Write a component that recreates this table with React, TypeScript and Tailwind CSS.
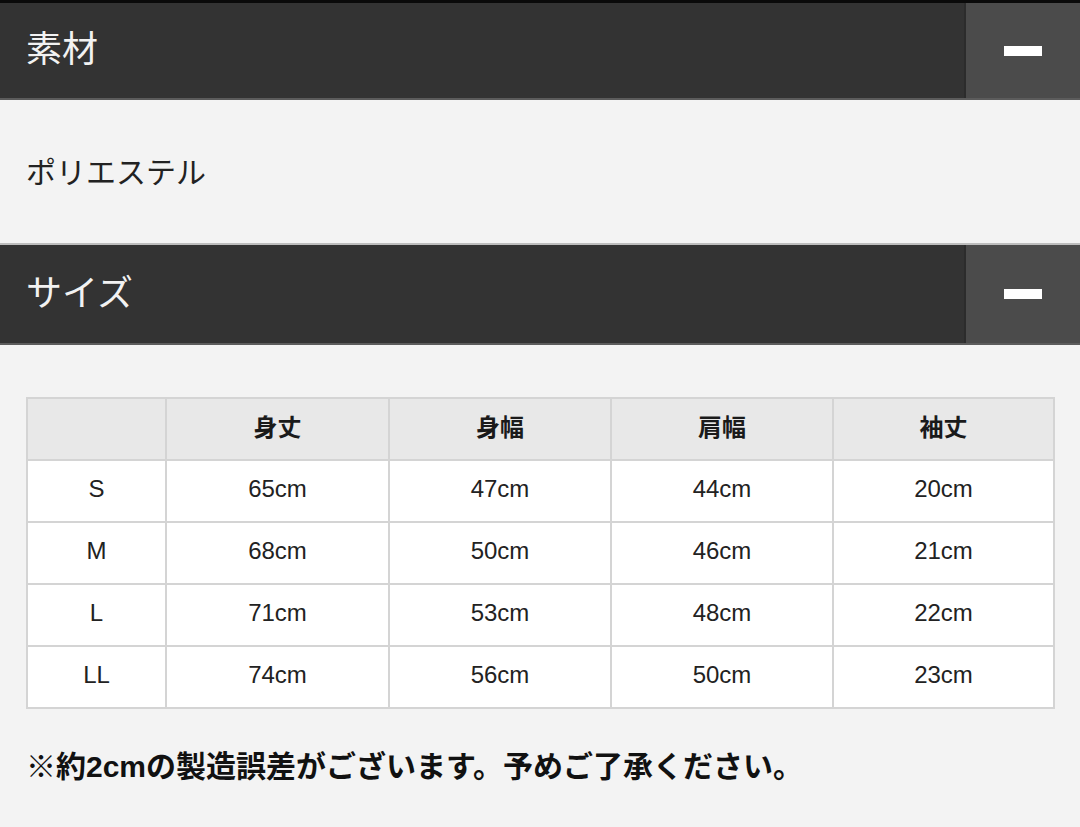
import React from "react";

const jp = { fontFamily: '"Noto Sans CJK JP", "Noto Sans", sans-serif' };
const latin = { fontFamily: '"Liberation Sans", "Noto Sans CJK JP", sans-serif' };

const columns = ["身丈", "身幅", "肩幅", "袖丈"];

const rows = [
  { size: "S", values: ["65cm", "47cm", "44cm", "20cm"] },
  { size: "M", values: ["68cm", "50cm", "46cm", "21cm"] },
  { size: "L", values: ["71cm", "53cm", "48cm", "22cm"] },
  { size: "LL", values: ["74cm", "56cm", "50cm", "23cm"] },
];

function SectionHeader({ title, topLine }: { title: string; topLine?: boolean }) {
  return (
    <div
      className={`flex bg-[#333333] border-b-2 border-[#5c5c5c] ${
        topLine ? "border-t-2 border-t-[#bdbdbd] h-[102px]" : "h-[97px]"
      }`}
    >
      <div className="flex-1 flex items-center pl-[26px] pb-[9px]">
        <span className="text-[36px] text-[#f2f2f2] leading-none" style={jp}>
          {title}
        </span>
      </div>
      <button
        type="button"
        className="w-[116px] bg-[#4b4b4b] border-l-2 border-[#2c2c2c] flex items-center justify-center"
      >
        <span className="block w-[38px] h-[10px] bg-white" />
      </button>
    </div>
  );
}

export default function App() {
  return (
    <div className="min-h-screen bg-[#f3f3f3] w-[1080px]">
      <div className="h-[3px] bg-[#0a0a0a]" />
      <SectionHeader title="素材" />

      {/* Material */}
      <div className="h-[143px] flex items-center pl-[26px] pb-[2px]">
        <span className="text-[30px] text-[#222]" style={jp}>
          ポリエステル
        </span>
      </div>

      <SectionHeader title="サイズ" topLine />

      {/* Size table */}
      <div className="px-[26px] pt-[52px]">
        <table className="w-[1028px] border-collapse table-fixed bg-white">
          <colgroup>
            <col className="w-[139px]" />
            <col className="w-[223px]" />
            <col className="w-[222px]" />
            <col className="w-[222px]" />
            <col className="w-[221px]" />
          </colgroup>
          <thead>
            <tr className="h-[62px] bg-[#e8e8e8]">
              <th className="border-2 border-[#d4d4d4]" />
              {columns.map((c) => (
                <th
                  key={c}
                  className="border-2 border-[#d4d4d4] text-[24px] font-bold text-[#1a1a1a] text-center pb-[6px]"
                  style={jp}
                >
                  {c}
                </th>
              ))}
            </tr>
          </thead>
          <tbody>
            {rows.map((r) => (
              <tr key={r.size} className="h-[62px]">
                <td
                  className="border-2 border-[#d4d4d4] text-center text-[24px] text-[#222] pb-[4px]"
                  style={latin}
                >
                  {r.size}
                </td>
                {r.values.map((v, i) => (
                  <td
                    key={i}
                    className="border-2 border-[#d4d4d4] text-center text-[24px] text-[#222] pb-[4px]"
                    style={latin}
                  >
                    {v}
                  </td>
                ))}
              </tr>
            ))}
          </tbody>
        </table>
      </div>

      <div className="px-[26px] pt-[38px] pb-[40px]">
        <p className="text-[30px] font-bold text-[#111] leading-[40px]" style={latin}>
          ※約2cmの製造誤差がございます。予めご了承ください。
        </p>
      </div>
    </div>
  );
}
